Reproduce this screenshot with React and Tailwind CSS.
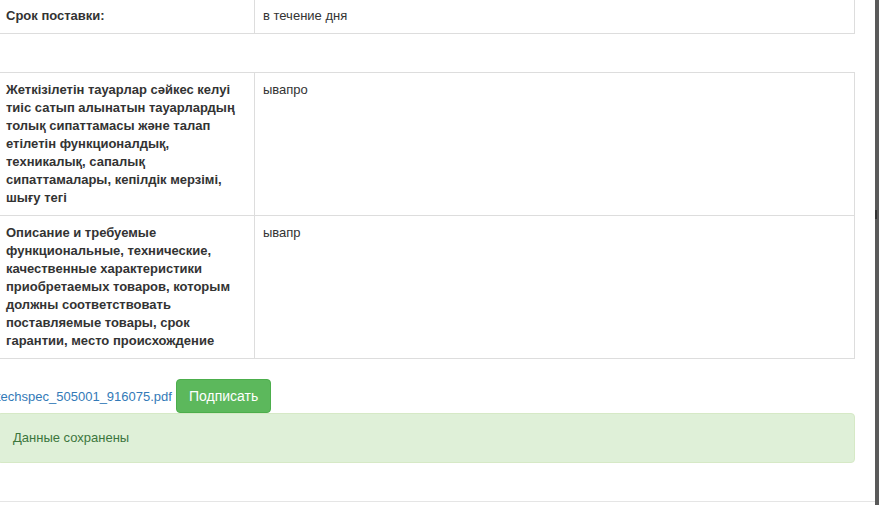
export default function App() {
  const font = { fontFamily: '"Liberation Sans", Arial, sans-serif' }
  return (
    <div className="flex w-[879px] h-[505px] overflow-hidden bg-white text-[13px] leading-[18px] text-[#333]" style={font}>
      <div className="w-[875px] shrink-0 flex flex-col">
        <div className="ml-[-3px] w-[858px]">
          <table className="w-full border-collapse -mt-[2px]">
            <tbody>
              <tr>
                <td className="w-[257px] border border-[#ddd] px-2 py-2 align-top font-bold">Срок поставки:</td>
                <td className="border border-[#ddd] px-2 py-2 align-top">в течение дня</td>
              </tr>
            </tbody>
          </table>

          <table className="w-full border-collapse mt-[38px]">
            <tbody>
              <tr>
                <td className="w-[257px] border border-[#ddd] px-2 py-2 align-top font-bold">
                  Жеткізілетін тауарлар сәйкес келуі тиіс сатып алынатын тауарлардың толық сипаттамасы және талап етілетін функционалдық, техникалық, сапалық сипаттамалары, кепілдік мерзімі, шығу тегі
                </td>
                <td className="border border-[#ddd] px-2 py-2 align-top">ывапро</td>
              </tr>
              <tr>
                <td className="w-[257px] border border-[#ddd] px-2 py-2 align-top font-bold">
                  Описание и требуемые функциональные, технические, качественные характеристики приобретаемых товаров, которым должны соответствовать поставляемые товары, срок гарантии, место происхождение
                </td>
                <td className="border border-[#ddd] px-2 py-2 align-top">ывапр</td>
              </tr>
            </tbody>
          </table>

          <div className="mt-[20px] flex items-baseline">
            <a href="#" className="text-[#337ab7]">techspec_505001_916075.pdf</a>
            <button className="ml-[4px] h-[34px] px-3 rounded-[4px] border border-[#4cae4c] bg-[#5cb85c] text-white text-[14px] leading-5">
              Подписать
            </button>
          </div>

          <div className="border border-[#d6e9c6] bg-[#dff0d8] text-[#3c763d] rounded-[4px] px-[15px] py-[15px]">
            Данные сохранены
          </div>
        </div>
        <div className="mt-[38px] border-t border-[#e5e5e5]"></div>
      </div>
      <div className="w-[4px] bg-[#5a5a5a] flex flex-col">
        <div className="mt-[210px] h-[9px] w-[2px] bg-[#8a6a3a] border border-[#333]"></div>
      </div>
    </div>
  )
}
